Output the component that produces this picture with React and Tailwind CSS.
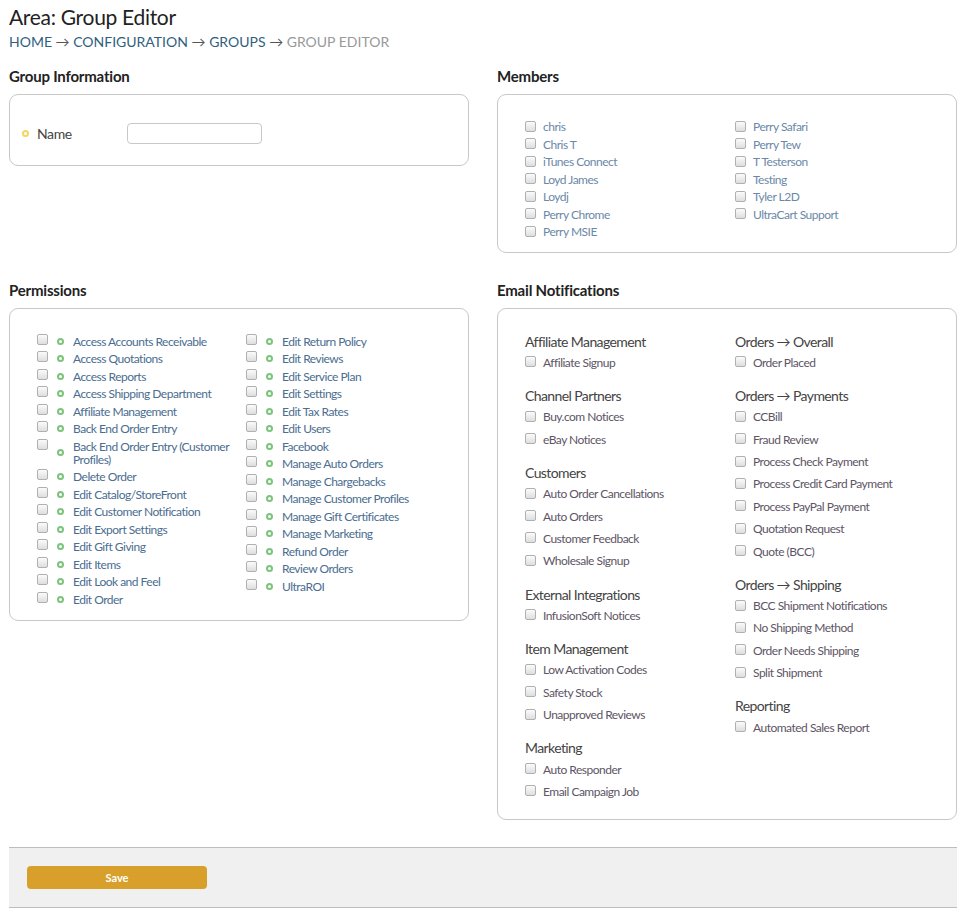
import React from "react";

const font = { fontFamily: "Lato, 'Open Sans', sans-serif" };

function Box({ children, className = "" }) {
  return (
    <div className={"border border-[#c8c8c8] rounded-[9px] bg-white " + className}>
      {children}
    </div>
  );
}

function Check({ className = "" }) {
  return (
    <span
      className={
        "inline-block w-[11px] h-[11px] shrink-0 rounded-[2px] border border-[#b0b0b0] bg-gradient-to-b from-[#fbfbfb] to-[#dedede] " +
        className
      }
    />
  );
}

function Heading({ children }) {
  return (
    <h2 className="text-[15px] leading-[18px] font-bold tracking-[-0.2px] text-[#222] mb-[9px]">{children}</h2>
  );
}

const members1 = ["chris", "Chris T", "iTunes Connect", "Loyd James", "Loydj", "Perry Chrome", "Perry MSIE"];
const members2 = ["Perry Safari", "Perry Tew", "T Testerson", "Testing", "Tyler L2D", "UltraCart Support"];

const perms1 = [
  "Access Accounts Receivable",
  "Access Quotations",
  "Access Reports",
  "Access Shipping Department",
  "Affiliate Management",
  "Back End Order Entry",
  "Back End Order Entry (Customer Profiles)",
  "Delete Order",
  "Edit Catalog/StoreFront",
  "Edit Customer Notification",
  "Edit Export Settings",
  "Edit Gift Giving",
  "Edit Items",
  "Edit Look and Feel",
  "Edit Order",
];
const perms2 = [
  "Edit Return Policy",
  "Edit Reviews",
  "Edit Service Plan",
  "Edit Settings",
  "Edit Tax Rates",
  "Edit Users",
  "Facebook",
  "Manage Auto Orders",
  "Manage Chargebacks",
  "Manage Customer Profiles",
  "Manage Gift Certificates",
  "Manage Marketing",
  "Refund Order",
  "Review Orders",
  "UltraROI",
];

const email1 = [
  ["Affiliate Management", ["Affiliate Signup"]],
  ["Channel Partners", ["Buy.com Notices", "eBay Notices"]],
  ["Customers", ["Auto Order Cancellations", "Auto Orders", "Customer Feedback", "Wholesale Signup"]],
  ["External Integrations", ["InfusionSoft Notices"]],
  ["Item Management", ["Low Activation Codes", "Safety Stock", "Unapproved Reviews"]],
  ["Marketing", ["Auto Responder", "Email Campaign Job"]],
];
const email2 = [
  ["Orders \u2192 Overall", ["Order Placed"]],
  [
    "Orders \u2192 Payments",
    [
      "CCBill",
      "Fraud Review",
      "Process Check Payment",
      "Process Credit Card Payment",
      "Process PayPal Payment",
      "Quotation Request",
      "Quote (BCC)",
    ],
  ],
  ["Orders \u2192 Shipping", ["BCC Shipment Notifications", "No Shipping Method", "Order Needs Shipping", "Split Shipment"]],
  ["Reporting", ["Automated Sales Report"]],
];

function MemberCol({ items }) {
  return (
    <div className="w-[210px]">
      {items.map((m) => (
        <div key={m} className="flex items-center gap-[7px] mb-[4.5px] leading-[13px]">
          <Check className="-mt-[1px]" />
          <span className="text-[12px] tracking-[-0.5px] text-[#6b88a8]">{m}</span>
        </div>
      ))}
    </div>
  );
}

function PermCol({ items }) {
  return (
    <div className="w-[209px]">
      {items.map((p) => (
        <div key={p} className="flex mb-[4.5px] leading-[13px]">
          <Check className="mt-[-1px]" />
          <span className="self-center ml-[9px] w-[7px] h-[7px] shrink-0 rounded-full border-2 border-[#7cc47c]" />
          <span className="ml-[9px] pr-[4px] text-[12px] tracking-[-0.5px] text-[#4a6d90]">{p}</span>
        </div>
      ))}
    </div>
  );
}

function EmailCol({ groups }) {
  return (
    <div className="w-[210px]">
      {groups.map(([title, items]) => (
        <div key={title} className="mb-[13px]">
          <div className="text-[14px] leading-[17.6px] tracking-[-0.6px] text-[#444]">{title}</div>
          <div className="pt-[1.5px]">
            {items.map((it) => (
              <div key={it} className="flex items-center gap-[7px] h-[22.4px]">
                <Check className="-mt-[2px]" />
                <span className="text-[12px] tracking-[-0.5px] text-[#5d5565]">{it}</span>
              </div>
            ))}
          </div>
        </div>
      ))}
    </div>
  );
}

export default function App() {
  return (
    <div style={font} className="w-[964px] min-h-[915px] bg-white px-[9px] text-[#333]">
      <h1 className="pt-[3px] text-[21px] leading-[28px] tracking-[-0.3px] text-[#222]">Area: Group Editor</h1>
      <div className="text-[14px] leading-[18px] mt-[2px] uppercase">
        <span className="text-[#2f5f80]">Home</span>
        <span className="text-[#555]"> {"\u2192"} </span>
        <span className="text-[#2f5f80]">Configuration</span>
        <span className="text-[#555]"> {"\u2192"} </span>
        <span className="text-[#2f5f80]">Groups</span>
        <span className="text-[#555]"> {"\u2192"} </span>
        <span className="text-[#999]">Group Editor</span>
      </div>

      <div className="grid grid-cols-[460px_460px] gap-x-[28px] gap-y-[28px] items-start mt-[16px]">
        <section>
          <Heading>Group Information</Heading>
          <Box className="h-[72px] flex items-center pl-[12px] pt-[6px]">
            <span className="w-[7px] h-[7px] rounded-full border-2 border-[#f5d565]" />
            <span className="ml-[8px] w-[90px] text-[14px] tracking-[-0.4px] text-[#444]">Name</span>
            <input
              type="text"
              className="w-[135px] h-[21px] border border-[#c8c8c8] rounded-[4px] outline-none px-1 text-[12px]"
            />
          </Box>
        </section>

        <section>
          <Heading>Members</Heading>
          <Box className="pl-[27px] pt-[25px] pb-[9px] flex">
            <MemberCol items={members1} />
            <MemberCol items={members2} />
          </Box>
        </section>

        <section>
          <Heading>Permissions</Heading>
          <Box className="pl-[27px] pt-[26px] pb-[10px] flex">
            <PermCol items={perms1} />
            <PermCol items={perms2} />
          </Box>
        </section>

        <section>
          <Heading>Email Notifications</Heading>
          <Box className="pl-[27px] pt-[24px] pb-[3px] flex">
            <EmailCol groups={email1} />
            <EmailCol groups={email2} />
          </Box>
        </section>
      </div>

      <div className="mt-[27px] w-[948px] h-[61px] bg-[#f0f0f0] border-t border-b border-[#bdbdbd] pl-[18px] pt-[18px]">
        <button className="block w-[180px] h-[23px] rounded-[4px] bg-[#d8a02b] text-white text-[11px] leading-[23px] font-bold">
          Save
        </button>
      </div>
    </div>
  );
}
